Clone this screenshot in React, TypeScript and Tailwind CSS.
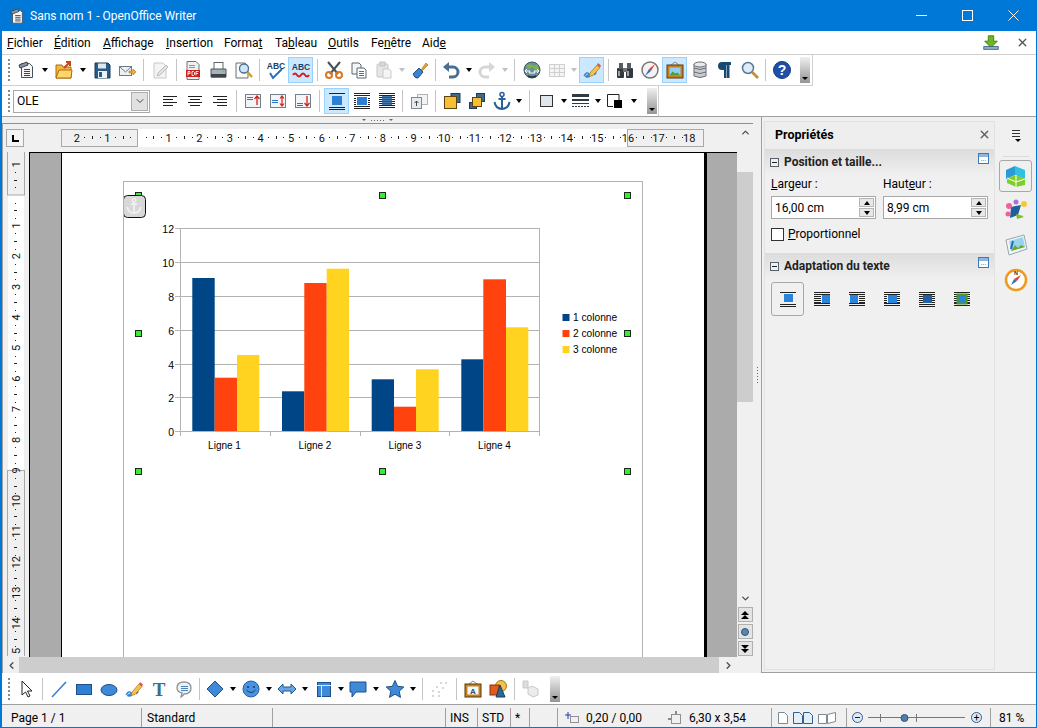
import React from "react";
import { ChevronUp, ChevronDown, ChevronLeft, ChevronRight, X } from "lucide-react";

const S = ({ children, size = 20, box = 20 }: { children: React.ReactNode; size?: number; box?: number }) => (
  <svg width={size} height={size} viewBox={`0 0 ${box} ${box}`} className="block">
    {children}
  </svg>
);

const lines = (ys: number[], x1: number, x2: number, c = "#222") =>
  ys.map((y) => <line key={y} x1={x1} x2={x2} y1={Math.floor(y) + 0.5} y2={Math.floor(y) + 0.5} stroke={c} strokeWidth="1" />);

const icons: Record<string, React.ReactNode> = {
  newdoc: (
    <>
      <path d="M5.500 3.500h8l3 3v11h-11z" fill="#f4f6f8" stroke="#45525e" />
      <path d="M3 5l8-3 1 3-8 3z" fill="#8a97a3" stroke="#3b4650" />
      {lines([9, 11, 13, 15], 8, 14, "#3c4650")}
    </>
  ),
  open: (
    <>
      <path d="M2 5h6l1 2h8v11H2z" fill="#f6b73c" stroke="#a86d10" />
      <path d="M2 18l3-8h13l-1 8z" fill="#ffd66b" stroke="#a86d10" />
      <path d="M10 8l6-6M12 2h4v4" stroke="#c9431b" strokeWidth="2" fill="none" />
    </>
  ),
  save: (
    <>
      <path d="M3 3h13l2 2v13H3z" fill="#2c5a86" stroke="#1d3b58" />
      <rect x="6" y="3.500" width="8" height="5" fill="#dfe7ee" />
      <rect x="6" y="11" width="9" height="7" fill="#eef3f7" />
      <rect x="7" y="12" width="3" height="5" fill="#2c5a86" />
    </>
  ),
  mail: (
    <>
      <rect x="2.500" y="6.500" width="12" height="9" fill="#eef1f4" stroke="#6d7a86" />
      <path d="M3 7l5.500 5L14 7" fill="none" stroke="#6d7a86" />
      <path d="M12 11h4V9l3 3-3 3v-2h-4z" fill="#f3b33d" stroke="#a5720f" strokeWidth=".6" />
    </>
  ),
  edit: (
    <>
      <path d="M4 3h9l3 3v12H4z" fill="#f4f4f4" stroke="#c9c9c9" />
      <path d="M8 13l8-8 2 2-8 8-3 1z" fill="#e2e2e2" stroke="#bdbdbd" />
    </>
  ),
  pdf: (
    <>
      <path d="M4 1.500h9l3 3v15H4z" fill="#eef1f4" stroke="#68737d" />
      {lines([5, 7], 6, 12, "#8b96a0")}
      <rect x="3" y="10" width="14" height="7" fill="#c8201b" />
      <path d="M5 15.500v-4h2v2H5M9 11.500v4h1.500l1-1v-2l-1-1zM13 15.500v-4h2.500M13 13.500h2" stroke="#fff" fill="none" strokeWidth=".9" />
    </>
  ),
  print: (
    <>
      <rect x="6" y="2.500" width="9" height="7" fill="#fff" stroke="#5e6870" />
      <path d="M3 9h15v8H3z" fill="#a9b1b8" stroke="#4b545b" />
      <rect x="3" y="14" width="15" height="3.500" fill="#3d454c" />
      <rect x="14" y="10.500" width="2" height="1.500" fill="#5fd15f" />
    </>
  ),
  preview: (
    <>
      <path d="M3 3h9l3 3v12H3z" fill="#fafafa" stroke="#66717b" />
      <circle cx="11" cy="8.500" r="4.500" fill="#cfe6f8" stroke="#4f6f8a" strokeWidth="1.300" />
      <path d="M14.500 12l4.500 5" stroke="#d59a2a" strokeWidth="2.400" />
    </>
  ),
  spell: (
    <>
      <path d="M4 13l3 5 9-9" fill="none" stroke="#2a6fc0" strokeWidth="2" />
      <text x="10" y="9" textAnchor="middle" fontSize="8.500" fontWeight="700" fontFamily="Liberation Sans" fill="#1f3f66">ABC</text>
    </>
  ),
  autospell: (
    <>
      <text x="10" y="10" textAnchor="middle" fontSize="8.500" fontWeight="700" fontFamily="Liberation Sans" fill="#1f3f66">ABC</text>
      <path d="M2 15q2-3 4 0t4 0 4 0 4 0" fill="none" stroke="#d4201c" strokeWidth="2" />
    </>
  ),
  cut: (
    <>
      <path d="M4 2l10 12M16 2L6 14" stroke="#4a4f54" strokeWidth="2" />
      <circle cx="5" cy="15" r="3" fill="none" stroke="#d8791f" strokeWidth="2" />
      <circle cx="15" cy="15" r="3" fill="none" stroke="#d8791f" strokeWidth="2" />
    </>
  ),
  copy: (
    <>
      <path d="M3 3h7l2 2v9H3z" fill="#f3f5f7" stroke="#5b6670" />
      <path d="M8 8h7l2 2v8H8z" fill="#fff" stroke="#5b6670" />
      {lines([11, 13, 15], 10, 15, "#4277a8")}
    </>
  ),
  paste: (
    <>
      <rect x="3" y="4" width="11" height="13" rx="1" fill="#e6e6e6" stroke="#c4c4c4" />
      <rect x="6" y="2" width="5" height="4" fill="#d8d8d8" stroke="#c4c4c4" />
      <path d="M9 9h6l2 2v7H9z" fill="#f5f5f5" stroke="#c9c9c9" />
    </>
  ),
  brush: (
    <>
      <path d="M11 10l5-7 2 2-6 6z" fill="#e4a035" stroke="#9a6a1a" strokeWidth=".6" />
      <path d="M3 14l6-6 4 4-5 6q-3 1-5-4z" fill="#3c83d0" stroke="#1f4f85" />
    </>
  ),
  undo: (
    <>
      <path d="M5 7h7a4.500 4.500 0 010 10H8" fill="none" stroke="#4a6f92" strokeWidth="3" />
      <path d="M8 2v10L2 7z" fill="#4a6f92" />
    </>
  ),
  redo: (
    <>
      <path d="M15 7H8a4.500 4.500 0 000 10h4" fill="none" stroke="#d6d6d6" strokeWidth="3" />
      <path d="M12 2v10l6-5z" fill="#d6d6d6" />
    </>
  ),
  globe: (
    <>
      <circle cx="10" cy="10" r="8" fill="#6b8f9c" stroke="#3f5560" />
      <path d="M4 6q3-3 6-1t5-1l2 5-4 1-2-3-5 2z" fill="#7fb24a" />
      <path d="M3 11h5l-1 2h6l-1-2h5M5 13l-2-2 2-2M15 13l2-2-2-2" stroke="#fff" fill="none" />
      <path d="M6 16q4 2 8 0" stroke="#26323a" fill="none" strokeWidth="1.500" />
    </>
  ),
  table: (
    <>
      <rect x="2.500" y="4.500" width="15" height="12" fill="#f5f5f5" stroke="#d0d0d0" />
      {lines([8.500, 12.500], 3, 17, "#d0d0d0")}
      <path d="M7.500 5v11M12.500 5v11" stroke="#d0d0d0" />
    </>
  ),
  draw: (
    <>
      <path d="M2 16q3-5 5-2t-2 3 4-3 3 1" fill="none" stroke="#3b83cf" strokeWidth="1.400" />
      <path d="M8 13l7-8 3 2.500-7 8-4 1z" fill="#f6c24a" stroke="#a1701c" strokeWidth=".7" />
      <path d="M15 5l1-2 3 2.500-1 2z" fill="#e0544a" />
    </>
  ),
  binoc: (
    <>
      <rect x="2" y="8" width="7" height="10" rx="1" fill="#33383d" />
      <rect x="11" y="8" width="7" height="10" rx="1" fill="#33383d" />
      <rect x="4" y="3" width="4" height="6" fill="#555c63" />
      <rect x="12" y="3" width="4" height="6" fill="#555c63" />
      <rect x="8" y="8" width="4" height="4" fill="#6d747a" />
      <rect x="3" y="11" width="2" height="5" fill="#9aa3ab" />
      <rect x="12" y="11" width="2" height="5" fill="#9aa3ab" />
    </>
  ),
  compass: (
    <>
      <circle cx="10" cy="10" r="8" fill="#f3f3f3" stroke="#777" strokeWidth="1.500" />
      <path d="M15 4l-4 7-2-2z" fill="#e0412f" />
      <path d="M5 16l4-7 2 2z" fill="#2f6fb5" />
    </>
  ),
  gallery: (
    <>
      <path d="M6 5l4-3 4 3" fill="none" stroke="#888" />
      <rect x="2" y="5" width="16" height="13" fill="#c87f1f" stroke="#5a3a0e" />
      <rect x="4.500" y="7.500" width="11" height="8" fill="#8fd0f5" />
      <path d="M4.500 15.500l3-4 3 2 2-1 3 3z" fill="#4f9e3a" />
    </>
  ),
  db: (
    <>
      <path d="M4 4v12q6 3 12 0V4z" fill="#c9cdd1" stroke="#666e75" />
      <ellipse cx="10" cy="4.500" rx="6" ry="2.500" fill="#e8eaec" stroke="#666e75" />
      <path d="M4 8q6 3 12 0M4 12q6 3 12 0" fill="none" stroke="#666e75" />
    </>
  ),
  pilcrow: <path d="M9 18V10H7a4 4 0 010-8h9v3h-1.500v13H12V5h-.5v13z" fill="#174a72" />,
  find: (
    <>
      <circle cx="8" cy="8" r="5.500" fill="#dcecf9" stroke="#5f7890" strokeWidth="1.500" />
      <path d="M12 12l6 6" stroke="#c68f2c" strokeWidth="2.600" />
    </>
  ),
  help: (
    <>
      <circle cx="10" cy="10" r="8.500" fill="#1f4fa8" stroke="#14397c" />
      <text x="10" y="15" textAnchor="middle" fontSize="14" fontWeight="700" fontFamily="Liberation Sans" fill="#fff">?</text>
    </>
  ),
  alignL: <>{lines([5], 3, 17)}{lines([8], 3, 13)}{lines([11], 3, 17)}{lines([14], 3, 13)}</>,
  alignC: <>{lines([5], 3, 17)}{lines([8], 5, 15)}{lines([11], 3, 17)}{lines([14], 5, 15)}</>,
  alignR: <>{lines([5], 3, 17)}{lines([8], 7, 17)}{lines([11], 3, 17)}{lines([14], 7, 17)}</>,
  vtop: (
    <>
      <rect x="2.500" y="3.500" width="15" height="13" fill="#f2f5f8" stroke="#75808a" />
      {lines([6, 8], 4, 10, "#2a76c6")}
      <path d="M14 14V6M11.500 8L14 5l2.500 3" stroke="#d8201c" fill="none" strokeWidth="1.300" />
    </>
  ),
  vmid: (
    <>
      <rect x="2.500" y="3.500" width="15" height="13" fill="#f2f5f8" stroke="#75808a" />
      {lines([9, 11], 4, 10, "#2a76c6")}
      <path d="M14 6v8M12 7.500L14 5l2 2.500M12 12.500l2 2.500 2-2.500" stroke="#d8201c" fill="none" strokeWidth="1.200" />
    </>
  ),
  vbot: (
    <>
      <rect x="2.500" y="3.500" width="15" height="13" fill="#f2f5f8" stroke="#75808a" />
      {lines([12, 14], 4, 10, "#2a76c6")}
      <path d="M14 5v9M11.500 12l2.500 3 2.500-3" stroke="#d8201c" fill="none" strokeWidth="1.300" />
    </>
  ),
  wrapNone: (
    <>
      {lines([2, 16, 18], 2, 18)}
      <rect x="5" y="5" width="10" height="9" fill="#2b7fd4" />
    </>
  ),
  wrapPage: (
    <>
      {lines([2, 4, 15, 17], 2, 18)}
      {lines([7, 9, 11, 13], 2, 4)}
      {lines([7, 9, 11, 13], 16, 18)}
      <rect x="5" y="6" width="10" height="8" fill="#2b7fd4" />
    </>
  ),
  wrapThrough: (
    <>
      {lines([2, 4, 6, 8, 10, 12, 14, 16], 2, 18)}
      <rect x="5" y="5" width="10" height="9" fill="#23609f" opacity=".85" />
    </>
  ),
  frameLink: (
    <>
      <rect x="8.500" y="3.500" width="10" height="10" fill="#f3f3f3" stroke="#aeb4b9" />
      <rect x="2.500" y="6.500" width="10" height="11" fill="#e6eaee" stroke="#7f8a94" />
      <path d="M7.500 15v-5M5.500 12l2-2 2 2" stroke="#444" fill="none" />
    </>
  ),
  front: (
    <>
      <rect x="9" y="2.500" width="9" height="9" fill="#3c6a90" stroke="#1d3b58" />
      <rect x="2.500" y="5.500" width="12" height="12" fill="#f8bf35" stroke="#5c4310" />
    </>
  ),
  back: (
    <>
      <rect x="9.500" y="2.500" width="8" height="8" fill="#3c6a90" stroke="#1d3b58" />
      <rect x="2.500" y="11.500" width="7" height="6" fill="#3c6a90" stroke="#1d3b58" />
      <rect x="5.500" y="6.500" width="9" height="9" fill="#f8bf35" stroke="#5c4310" />
    </>
  ),
  anchor: (
    <>
      <circle cx="10" cy="3.500" r="2" fill="none" stroke="#2a5f98" strokeWidth="1.500" />
      <path d="M10 5.500V18M6.500 8h7" stroke="#2a5f98" strokeWidth="2" />
      <path d="M2.500 11q1 6.500 7.500 7 6.500-.5 7.500-7" fill="none" stroke="#2a5f98" strokeWidth="2" />
    </>
  ),
  border: <rect x="3.500" y="4.500" width="12" height="11" fill="#dfe6ec" stroke="#333" />,
  linestyle: (
    <>
      <rect x="1" y="3" width="17" height="3" fill="#2f3b45" />
      <rect x="1" y="8" width="17" height="2" fill="#2f3b45" />
      {lines([12], 1, 18, "#2f3b45")}
      <line x1="1" x2="18" y1="15.500" y2="15.500" stroke="#2f3b45" strokeDasharray="2 1" />
    </>
  ),
  bgfill: (
    <>
      <path d="M8 15.500H2.500V3.500H14V9" fill="#fff" stroke="#222" />
      <rect x="9" y="9" width="8" height="8" fill="#000" />
    </>
  ),
  pointer: <path d="M6 2v14l3.500-3 2.500 5 2-1-2.500-5H16z" fill="#fff" stroke="#222" />,
  line: <line x1="3" y1="18" x2="17" y2="3" stroke="#3d80c8" strokeWidth="1.600" />,
  rect: <rect x="2.500" y="5.500" width="15" height="10" fill="#2f7fd6" stroke="#1e4f86" />,
  ellipse: <ellipse cx="10" cy="11" rx="8" ry="5.500" fill="#3f8ad8" stroke="#1e4f86" />,
  ttext: <text x="10" y="17" textAnchor="middle" fontSize="19" fontWeight="700" fontFamily="Liberation Serif" fill="#3b6c8f">T</text>,
  callout: (
    <>
      <path d="M3 9q0-6 7-6t7 6-7 6q-1 2-3 3l1-4q-5-1-5-5z" fill="#eef0f2" stroke="#8b949c" strokeWidth="1.300" />
      {lines([7, 9, 11], 7, 14, "#4a83b8")}
    </>
  ),
  diamond: <path d="M10 2l8 8-8 8-8-8z" fill="#3f8ad8" stroke="#1e4f86" />,
  smiley: (
    <>
      <circle cx="10" cy="10" r="8" fill="#4a93e0" stroke="#2362a4" />
      <circle cx="7" cy="8" r="1" fill="#163e6b" />
      <circle cx="13" cy="8" r="1" fill="#163e6b" />
      <path d="M5.500 11q4.500 5 9 0" stroke="#163e6b" fill="none" />
    </>
  ),
  arrows: <path d="M1 10l5-5v3h8V5l5 5-5 5v-3H6v3z" fill="#6aa6e4" stroke="#20578f" />,
  flow: (
    <>
      <rect x="3.500" y="3.500" width="13" height="14" fill="#3f8ad8" stroke="#1e4f86" />
      <path d="M3 6.500h14M7.500 6.500V18" stroke="#dbe9f7" />
    </>
  ),
  bubble: <path d="M2 3h16v10H8l-4 5v-5H2z" fill="#3f8ad8" stroke="#1e4f86" />,
  star: <path d="M10 1.500l2.600 5.800 6.200.7-4.600 4.200 1.300 6.200L10 15.200l-5.500 3.200 1.300-6.200L1.200 8l6.200-.7z" fill="#3f8ad8" stroke="#1e4f86" />,
  points: (
    <>
      {[[11, 4], [16, 4], [7, 8], [13, 9], [3, 12], [9, 13], [3, 17], [9, 17]].map(([x, y]) => (
        <circle key={`${x}-${y}`} cx={x} cy={y} r=".9" fill="#c4c4c4" />
      ))}
    </>
  ),
  fontwork: (
    <>
      <path d="M6 5l4-3 4 3" fill="none" stroke="#888" />
      <rect x="2" y="5" width="16" height="13" fill="#c87f1f" stroke="#5a3a0e" />
      <rect x="4.500" y="7.500" width="11" height="8" fill="#f4f7fa" />
      <text x="10" y="14.500" textAnchor="middle" fontSize="8" fontWeight="700" fontFamily="Liberation Sans" fill="#244f7d">A</text>
    </>
  ),
  shapes: (
    <>
      <circle cx="13" cy="7" r="5.500" fill="#f3c04a" stroke="#a77a16" />
      <rect x="2" y="6" width="9" height="10" fill="#e25a1c" stroke="#8a330c" />
      <path d="M12 6l5 12H8z" fill="#2f6796" stroke="#163e60" />
    </>
  ),
  extrude: (
    <>
      <path d="M2 2h5v7H2z" fill="#dcdcdc" stroke="#c8c8c8" />
      <path d="M7 9l4-2 6 3v6l-5 2-5-3z" fill="#ececec" stroke="#c8c8c8" />
    </>
  ),
};

const Ic = ({ name }: { name: string }) => <S>{icons[name]}</S>;

const Btn = ({ name, active }: { name: string; active?: boolean }) => (
  <div
    className={
      active
        ? "w-[25px] h-[26px] flex items-center justify-center border border-[#99d1ff] bg-[#cce8ff]"
        : "w-[25px] h-[26px] flex items-center justify-center"
    }
  >
    <Ic name={name} />
  </div>
);

const Caret = ({ w = 13, off }: { w?: number; off?: boolean }) => (
  <div className="flex items-center justify-center shrink-0" style={{ width: w }}>
    <div
      className={
        off
          ? "w-0 h-0 border-x-[3.5px] border-x-transparent border-t-[4px] border-t-[#c0c0c0]"
          : "w-0 h-0 border-x-[3.5px] border-x-transparent border-t-[4px] border-t-black"
      }
    />
  </div>
);

const Sep = ({ w = 8 }: { w?: number }) => (
  <div className="flex justify-center shrink-0" style={{ width: w }}>
    <div className="w-px h-[22px] bg-[#c4c4c4]" />
  </div>
);

const Grip = ({ w = 13 }: { w?: number }) => (
  <div className="flex justify-center items-center shrink-0 pl-[2px]" style={{ width: w }}>
    <div className="h-[22px] w-0 border-l-2 border-dotted border-[#8a8a8a]" />
  </div>
);

const More = () => (
  <div className="w-[10px] h-[26px] bg-linear-to-b from-[#f0f0f0] to-[#959595] flex items-end justify-center pb-[3px]">
    <div className="w-0 h-0 border-x-[3px] border-x-transparent border-t-[3px] border-t-black" />
  </div>
);

const Menu = ({ before, u, after, cls }: { before: string; u: string; after: string; cls: string }) => (
  <span className={cls}>
    {before}
    <u>{u}</u>
    {after}
  </span>
);

const HRuler = () => {
  const marks: React.ReactNode[] = [];
  const cm = 30.62;
  const zero = 77; // svg x of the ruler origin
  for (let i = -2; i <= 18; i++) {
    const x = zero + i * cm;
    if (i !== 0) {
      marks.push(
        <text key={`n${i}`} x={x} y={13} textAnchor="middle" fontSize="11" fontFamily="Roboto" fill="#111">
          {Math.abs(i)}
        </text>,
      );
    }
    if (i < 18) {
      [0.25, 0.75].forEach((f) =>
        marks.push(<rect key={`d${i}${f}`} x={Math.round(x + f * cm)} y={8} width="1" height="1" fill="#222" />),
      );
      marks.push(<rect key={`h${i}`} x={Math.round(x + 0.5 * cm)} y={7} width="1" height="3" fill="#222" />);
    }
  }
  return (
    <svg width="643" height="18" className="block">
      <rect x="0" y="0" width="643" height="18" fill="#f0f0f0" />
      <rect x="77" y="0" width="489" height="18" fill="#fff" />
      <rect x=".5" y=".5" width="76" height="17" fill="none" stroke="#a8a8a8" />
      <rect x="566.500" y=".5" width="76" height="17" fill="none" stroke="#a8a8a8" />
      {marks}
    </svg>
  );
};

const VRuler = () => {
  const marks: React.ReactNode[] = [];
  const cm = 30.6;
  const zero = 43;
  for (let i = -1; i <= 15; i++) {
    const y = zero + i * cm;
    if (i !== 0) {
      marks.push(
        <text
          key={`n${i}`}
          x={9}
          y={y}
          transform={`rotate(-90 9 ${y})`}
          dy="4"
          textAnchor="middle"
          fontSize="11"
          fontFamily="Roboto"
          fill="#111"
        >
          {Math.abs(i)}
        </text>,
      );
    }
    [0.25, 0.75].forEach((f) =>
      marks.push(<rect key={`d${i}${f}`} x={8} y={Math.round(y + f * cm)} width="1" height="1" fill="#222" />),
    );
    marks.push(<rect key={`h${i}`} x={7} y={Math.round(y + 0.5 * cm)} width="3" height="1" fill="#222" />);
  }
  return (
    <svg width="18" height="504" className="block shrink-0">
      <rect x="0" y="0" width="18" height="504" fill="#f0f0f0" />
      <rect x="1" y="43" width="16" height="275" fill="#fff" />
      <rect x=".5" y="-2" width="17" height="45" fill="none" stroke="#a8a8a8" />
      <rect x=".5" y="318.500" width="17" height="190" fill="none" stroke="#a8a8a8" />
      {marks}
    </svg>
  );
};

const bars = [
  { x: [192.3, 214.7, 237, 259.3], t: [278, 377.7, 355] },
  { x: [282, 304.3, 326.7, 349], t: [391.3, 283, 268.7] },
  { x: [371.7, 394, 416, 438.7], t: [379.3, 406.7, 369.3] },
  { x: [461.3, 483.3, 506, 528.3], t: [359.3, 279.3, 327.3] },
];
const colors = ["#004586", "#ff420e", "#ffd320"];
const gridY = [228.500, 262.500, 296.500, 330.500, 364.500, 397.500, 431.500];
const handles = [
  [138, 195],
  [382, 195],
  [627, 195],
  [138, 333],
  [627, 333],
  [138, 471],
  [382, 471],
  [627, 471],
];

const Chart = () => (
  <svg width="518" height="476" viewBox="124 182 518 476" className="block" fontFamily="Liberation Sans">
    {gridY.map((y, i) => (
      <g key={y}>
        <line x1="175" x2="540" y1={y} y2={y} stroke="#b3b3b3" />
        <text x="174" y={y + 4} textAnchor="end" fontSize="10.500" fill="#000">
          {12 - i * 2}
        </text>
      </g>
    ))}
    <line x1="180.500" x2="180.500" y1="228" y2="436" stroke="#b3b3b3" />
    <line x1="539.500" x2="539.500" y1="228" y2="436" stroke="#b3b3b3" />
    {[270.500, 360.500, 449.500].map((x) => (
      <line key={x} x1={x} x2={x} y1="431" y2="436" stroke="#b3b3b3" />
    ))}
    {bars.map((g, gi) =>
      g.t.map((t, i) => (
        <rect key={`${gi}-${i}`} x={g.x[i]} y={t} width={g.x[i + 1] - g.x[i]} height={431 - t} fill={colors[i]} />
      )),
    )}
    {["Ligne 1", "Ligne 2", "Ligne 3", "Ligne 4"].map((l, i) => (
      <text key={l} x={[224.500, 315, 405, 494.500][i]} y="449" textAnchor="middle" fontSize="10" fill="#000">
        {l}
      </text>
    ))}
    {["1 colonne", "2 colonne", "3 colonne"].map((l, i) => (
      <g key={l}>
        <rect x="562.500" y={314 + i * 16} width="7" height="7" fill={colors[i]} />
        <text x="573" y={321 + i * 16} fontSize="10.200" fill="#000">
          {l}
        </text>
      </g>
    ))}
    {handles.map(([x, y]) => (
      <rect key={`${x}-${y}`} x={x - 2.5} y={y - 2.5} width="6" height="6" fill="#33ee33" stroke="#1a2a1a" />
    ))}
    <rect x="123.500" y="195.500" width="22" height="22" rx="4" fill="#d8d8d8" stroke="#111" />
    <g transform="translate(125 197) scale(.9)" opacity=".9">
      <circle cx="10" cy="3.500" r="2" fill="none" stroke="#f4f4f4" strokeWidth="1.500" />
      <path d="M10 5.500V18M6.500 8h7" stroke="#f4f4f4" strokeWidth="2" />
      <path d="M2.500 11q1 6.500 7.500 7 6.500-.5 7.500-7" fill="none" stroke="#f4f4f4" strokeWidth="2" />
    </g>
  </svg>
);

const Spin = ({ value }: { value: string }) => (
  <div className="w-[105px] h-[23px] border border-[#a8a8a8] bg-white flex items-center justify-between pl-[3px] pr-px">
    <span>{value}</span>
    <div className="w-[15px] h-[19px] flex flex-col gap-px">
      <div className="flex-1 bg-[#e8e8e8] border border-[#b5b5b5] flex items-center justify-center">
        <div className="w-0 h-0 border-x-[3px] border-x-transparent border-b-[4px] border-b-black" />
      </div>
      <div className="flex-1 bg-[#e8e8e8] border border-[#b5b5b5] flex items-center justify-center">
        <div className="w-0 h-0 border-x-[3px] border-x-transparent border-t-[4px] border-t-black" />
      </div>
    </div>
  </div>
);

const DeckHeader = ({ title }: { title: string }) => (
  <div className="h-[26px] shrink-0 bg-linear-to-b from-[#dcdcdc] to-[#f0f0f0] flex items-center pl-[5px] pr-[5px]">
    <div className="w-[9px] h-[9px] border border-[#55606a] bg-[#eef0f2] flex items-center justify-center mr-[5px]">
      <div className="w-[5px] h-px bg-[#222]" />
    </div>
    <span className="font-bold text-[#222] flex-1">{title}</span>
    <div className="w-[11px] h-[11px] border border-[#3f78b5] bg-white mb-[8px] flex flex-col">
      <div className="h-[3px] bg-[#8fb6de]" />
      <div className="text-[7px] leading-[5px] text-center text-[#244f7d]">...</div>
    </div>
  </div>
);

type WrapKind = "none" | "right" | "left" | "both" | "through" | "frame";

// the little text-wrap pictures in the sidebar deck
const WrapIcon = ({ kind }: { kind: WrapKind }) => {
  const boxX = kind === "right" ? 8 : kind === "left" ? 1 : 4;
  const boxW = kind === "right" || kind === "left" ? 8 : 9;
  const fullRows = kind === "none" ? [1, 13, 15] : kind === "through" ? [1, 3, 5, 7, 9, 11, 13, 15] : [1, 3, 12, 14];
  const sideRows = kind === "none" || kind === "through" ? [] : [5, 7, 9, 11];
  return (
    <svg width="16" height="16" className="block">
      {lines(fullRows, 0, 16)}
      {(kind === "right" || kind === "both" || kind === "frame") && lines(sideRows, 0, 3)}
      {(kind === "left" || kind === "both" || kind === "frame") && lines(sideRows, 13, 16)}
      {kind === "right" && lines(sideRows, 3, 7)}
      {kind === "left" && lines(sideRows, 10, 13)}
      <rect x={boxX} y={kind === "none" ? 3 : 4} width={boxW} height={8} fill={kind === "through" ? "#23609f" : "#2b84dc"} />
      {kind === "frame" && <rect x="3.500" y="3.500" width="9" height="9" fill="#2b84dc" stroke="#4c9a1e" strokeWidth="2" />}
    </svg>
  );
};

const TabIcon = ({ children }: { children: React.ReactNode }) => (
  <div className="h-[35px] flex items-center justify-center">
    <S size={26} box={26}>{children}</S>
  </div>
);

const StatusCell = ({ w, children }: { w: number; children?: React.ReactNode }) => (
  <div className="h-[19px] border-r border-[#a0a0a0] flex items-center shrink-0" style={{ width: w }}>
    {children}
  </div>
);

export default function App() {
  return (
    <div
      className="w-[1037px] h-[728px] flex flex-col overflow-hidden bg-white border-l-2 border-r border-b border-[#0078d7] text-[12px] text-black"
      style={{ fontFamily: "Roboto, 'Liberation Sans', sans-serif" }}
    >
      {/* title */}
      <div className="h-[31px] shrink-0 bg-[#0078d7] flex items-center text-white">
        <div className="w-[28px] flex justify-end pr-[4px]">
          <S size={18}>
            <path d="M5 4h9l2 2v12H5z" fill="#f4f6f8" stroke="#45525e" />
            <path d="M3 5l8-3 1 3-8 3z" fill="#8a97a3" stroke="#3b4650" />
            {lines([9, 11, 13, 15], 8, 14, "#3c4650")}
          </S>
        </div>
        <span className="flex-1">Sans nom 1 - OpenOffice Writer</span>
        <div className="w-[46px] flex justify-center">
          <svg width="11" height="11" className="block"><line x1="0" x2="11" y1="5.500" y2="5.500" stroke="#fff" /></svg>
        </div>
        <div className="w-[46px] flex justify-center">
          <svg width="11" height="11" className="block"><rect x=".5" y=".5" width="10" height="10" fill="none" stroke="#fff" /></svg>
        </div>
        <div className="w-[46px] flex justify-center">
          <svg width="11" height="11" className="block"><path d="M.5.500l10 10M10.500.500l-10 10" stroke="#fff" fill="none" /></svg>
        </div>
      </div>

      {/* menu */}
      <div className="h-[24px] shrink-0 flex items-center border-b border-[#d0d0d0] pl-[5px] pr-[6px]">
        <Menu cls="w-[47px]" before="" u="F" after="ichier" />
        <Menu cls="w-[49px]" before="" u="É" after="dition" />
        <Menu cls="w-[63px]" before="" u="A" after="ffichage" />
        <Menu cls="w-[58px]" before="" u="I" after="nsertion" />
        <Menu cls="w-[51px]" before="Forma" u="t" after="" />
        <Menu cls="w-[53px]" before="Ta" u="b" after="leau" />
        <Menu cls="w-[43px]" before="" u="O" after="utils" />
        <Menu cls="w-[51px]" before="Fe" u="n" after="être" />
        <Menu cls="w-[30px]" before="Aid" u="e" after="" />
        <div className="flex-1" />
        <div className="mr-[16px]">
          <S size={18}>
            <path d="M7 2h6v6h4l-7 7-7-7h4z" fill="#6cb81e" stroke="#3d7a0e" />
            <rect x="2" y="14" width="16" height="3" fill="#8fb5d0" stroke="#3a5f7d" />
          </S>
        </div>
        <X size={13} strokeWidth={2.5} className="text-[#555] mr-[1px]" />
      </div>

      {/* standard toolbar */}
      <div className="h-[31px] shrink-0 w-[811px] flex items-center border-r border-b border-[#d0d0d0]">
        <Grip w={11} />
        <Btn name="newdoc" /><Caret />
        <Btn name="open" /><Caret />
        <Btn name="save" /><Btn name="mail" /><Sep />
        <Btn name="edit" /><Sep />
        <Btn name="pdf" /><Btn name="print" /><Btn name="preview" /><Sep />
        <Btn name="spell" /><Btn name="autospell" active /><Sep />
        <Btn name="cut" /><Btn name="copy" /><Btn name="paste" /><Caret w={11} off />
        <Btn name="brush" /><Sep w={6} />
        <Btn name="undo" /><Caret w={11} />
        <Btn name="redo" /><Caret w={11} off /><Sep w={9} />
        <Btn name="globe" /><Btn name="table" /><Caret w={10} off />
        <Btn name="draw" active /><Sep />
        <Btn name="binoc" /><Btn name="compass" /><Btn name="gallery" active /><Btn name="db" /><Btn name="pilcrow" /><Btn name="find" /><Sep w={7} />
        <Btn name="help" />
        <div className="ml-[6px]"><More /></div>
      </div>

      {/* format toolbar */}
      <div className="h-[31px] shrink-0 flex items-center border-b border-[#a0a0a0]">
        <div className="w-[657px] h-[30px] flex items-center border-r border-[#d0d0d0]">
          <Grip w={11} />
          <div className="w-[137px] h-[23px] border border-[#a8a8a8] flex items-center justify-between pl-[3px] pr-px">
            <span>OLE</span>
            <div className="w-[17px] h-[19px] bg-[#e1e1e1] border border-[#adadad] flex items-center justify-center">
              <ChevronDown size={12} className="text-[#444]" />
            </div>
          </div>
          <div className="w-[7px]" />
          <Btn name="alignL" /><Btn name="alignC" /><Btn name="alignR" /><Sep />
          <Btn name="vtop" /><Btn name="vmid" /><Btn name="vbot" /><Sep w={9} />
          <Btn name="wrapNone" active /><Btn name="wrapPage" /><Btn name="wrapThrough" /><Sep w={7} />
          <Btn name="frameLink" /><Sep />
          <Btn name="front" /><Btn name="back" /><Btn name="anchor" /><Caret w={10} /><Sep w={10} />
          <Btn name="border" /><Caret w={10} />
          <div className="-ml-px"><Btn name="linestyle" /></div><Caret w={10} />
          <div className="-ml-px"><Btn name="bgfill" /></div><Caret w={13} />
          <div className="ml-[7px]"><More /></div>
        </div>
      </div>

      {/* main */}
      <div className="flex-1 min-h-0 flex bg-[#f0f0f0]">
        <div className="w-[751px] shrink-0 flex flex-col">
          {/* sash under the toolbars */}
          <div className="h-[7px] shrink-0 flex items-center justify-center border-b border-[#8f8f8f]">
            <div className="flex gap-[2px] items-center">
              <div className="w-0 h-0 border-x-[2px] border-x-transparent border-t-[2px] border-t-[#666] mr-[3px]" />
              {[1, 2, 3, 4, 5].map((d) => <div key={d} className="w-px h-px bg-[#666]" />)}
              <div className="w-0 h-0 border-x-[2px] border-x-transparent border-t-[2px] border-t-[#666] ml-[3px]" />
            </div>
          </div>
          <div className="flex-1 min-h-0 flex flex-col border-l border-[#a0a0a0]">
            <div className="flex-1 min-h-0 flex">
              <div className="w-[734px] flex flex-col">
                {/* ruler row */}
                <div className="h-[28px] shrink-0 flex items-center pl-[3px]">
                  <div className="w-[18px] h-[18px] bg-[#f4f4f4] border border-[#a8a8a8] flex items-center justify-center">
                    <div className="w-[7px] h-[7px] border-l-2 border-b-2 border-black" />
                  </div>
                  <div className="ml-[37px]"><HRuler /></div>
                </div>
                <div className="flex-1 min-h-0 flex pl-[4px]">
                  <VRuler />
                  <div className="ml-[4px] flex-1 bg-[#ababab] border-l border-t border-black flex overflow-hidden">
                    <div className="ml-[31px] w-[646px] h-full bg-white border-l border-r-[3px] border-black shrink-0 overflow-hidden">
                      <div className="ml-[61px] mt-[28px] w-[520px] h-[490px] border border-[#b3b3b3]">
                        <Chart />
                      </div>
                    </div>
                  </div>
                </div>
              </div>
              {/* vertical scrollbar */}
              <div className="w-[16px] shrink-0 flex flex-col items-center">
                <div className="h-[20px] pt-[3px]"><ChevronUp size={11} strokeWidth={3} className="text-[#505050]" /></div>
                <div className="h-[28px] shrink-0" />
                <div className="w-full h-[230px] shrink-0 bg-[#cdcdcd]" />
                <div className="flex-1" />
                <div className="h-[14px]"><ChevronDown size={11} strokeWidth={3} className="text-[#505050]" /></div>
                <div className="flex flex-col gap-[2px] pb-px">
                  <div className="w-[15px] h-[15px] bg-[#e4e4e4] border border-[#b0b0b0] flex flex-col items-center justify-center">
                    <div className="w-0 h-0 border-x-[4px] border-x-transparent border-b-[4px] border-b-black" />
                    <div className="w-0 h-0 border-x-[4px] border-x-transparent border-b-[4px] border-b-black" />
                  </div>
                  <div className="w-[15px] h-[15px] bg-[#e4e4e4] border border-[#b0b0b0] flex items-center justify-center">
                    <div className="w-[8px] h-[8px] rounded-full bg-[#5a87ad] border border-[#2f5575]" />
                  </div>
                  <div className="w-[15px] h-[15px] bg-[#e4e4e4] border border-[#b0b0b0] flex flex-col items-center justify-center">
                    <div className="w-0 h-0 border-x-[4px] border-x-transparent border-t-[4px] border-t-black" />
                    <div className="w-0 h-0 border-x-[4px] border-x-transparent border-t-[4px] border-t-black" />
                  </div>
                </div>
              </div>
            </div>
            {/* horizontal scrollbar */}
            <div className="h-[16px] shrink-0 flex items-center">
              <div className="w-[16px] flex justify-center"><ChevronLeft size={11} strokeWidth={3} className="text-[#505050]" /></div>
              <div className="w-[700px] h-full bg-[#cdcdcd]" />
              <div className="w-[18px] flex justify-center"><ChevronRight size={11} strokeWidth={3} className="text-[#505050]" /></div>
            </div>
          </div>
        </div>

        {/* sidebar sash */}
        <div className="w-[8px] shrink-0 flex flex-col items-center justify-center gap-[2px] pb-[40px]">
          {[1, 2, 3, 4, 5, 6].map((d) => <div key={d} className="w-px h-px bg-[#666]" />)}
        </div>

        {/* sidebar */}
        <div className="flex-1 min-w-0 flex border-l border-b border-[#a0a0a0]">
          <div className="w-[231px] shrink-0 mt-[4px] ml-[2px] mb-[2px] border border-[#e2e2e2] flex flex-col">
            <div className="h-[27px] shrink-0 flex items-center bg-[#eeeeee] pl-[10px] pr-[3px]">
              <span className="font-bold flex-1 text-[12.500px]">Propriétés</span>
              <X size={13} strokeWidth={2.5} className="text-[#606060] mb-[3px]" />
            </div>
            <DeckHeader title="Position et taille..." />
            <div className="h-[78px] shrink-0 px-[6px]">
              <div className="flex gap-[7px]">
                <div className="w-[105px]">
                  <div className="h-[21px]"><u>L</u>argeur :</div>
                  <Spin value="16,00 cm" />
                </div>
                <div className="w-[105px]">
                  <div className="h-[21px]">Haut<u>e</u>ur :</div>
                  <Spin value="8,99 cm" />
                </div>
              </div>
              <div className="flex items-center mt-[6px]">
                <div className="w-[13px] h-[13px] border border-[#333] bg-white mr-[4px]" />
                <span><u>P</u>roportionnel</span>
              </div>
            </div>
            <DeckHeader title="Adaptation du texte" />
            <div className="flex items-center pl-[6px] pt-[3px]">
              <div className="w-[33px] h-[34px] border border-[#a8a8a8] rounded-[3px] flex items-center justify-center">
                <WrapIcon kind="none" />
              </div>
              {(["right", "left", "both", "through", "frame"] as WrapKind[]).map((k) => (
                <div key={k} className="w-[35px] flex justify-center">
                  <WrapIcon kind={k} />
                </div>
              ))}
            </div>
          </div>

          {/* deck tabs */}
          <div className="flex-1 flex flex-col items-center pt-[8px]">
            <div className="h-[22px] mb-[9px] flex items-center">
              <div className="flex flex-col gap-[2px] items-center">
                <div className="w-[8px] h-px bg-[#333]" />
                <div className="w-[8px] h-px bg-[#333]" />
                <div className="w-[8px] h-px bg-[#333]" />
                <div className="w-0 h-0 border-x-[3px] border-x-transparent border-t-[3px] border-t-black ml-[5px]" />
              </div>
            </div>
            <div className="w-[26px] h-px bg-[#dcdcdc] mb-[3px]" />
            <div className="w-[33px] h-[32px] border border-[#a8a8a8] rounded-[3px] flex items-center justify-center">
              <S size={26} box={26}>
                <path d="M3 7l9-4v9l-9 4z" fill="#2a9bd8" />
                <path d="M12 3l10 4v9l-10-4z" fill="#2ec1e0" />
                <path d="M4 15l9-3 9 4v6l-9 2-9-4z" fill="#7fcf2a" />
                <path d="M13 12v12M4 15l9 4 9-3" stroke="#fff" fill="none" />
              </S>
            </div>
            <TabIcon>
              <path d="M8 10l10-2-3 10-8 3z" fill="#1f5f9a" />
              <path d="M13 17q5 1 8 3l-7 2z" fill="#7fbd2a" />
              <circle cx="6" cy="9" r="3" fill="#f05fa0" />
              <circle cx="13" cy="5" r="2.500" fill="#b070d0" />
              <circle cx="21" cy="7" r="3" fill="#f5c83a" />
              <circle cx="5" cy="17" r="2.500" fill="#f05fa0" />
            </TabIcon>
            <TabIcon>
              <path d="M3 8l18-5 3 14-18 6z" fill="#f2f6f9" stroke="#9aa6ae" />
              <path d="M6 9l14-4 2 10-14 4z" fill="#9ad3f0" />
              <path d="M8 19l4-6 3 3 3-3 4 2z" fill="#6aa82d" />
              <path d="M10 9l-2 8" stroke="#2a6fa8" strokeWidth="2" />
            </TabIcon>
            <TabIcon>
              <circle cx="13" cy="13" r="10" fill="#fff" stroke="#ee9a1e" strokeWidth="2.500" />
              <path d="M18 8l-4 6-3-2z" fill="#e0412f" />
              <path d="M8 18l3-6 3 2z" fill="#2f6fb5" />
              <text x="13" y="8" textAnchor="middle" fontSize="5.500" fontWeight="700" fontFamily="Liberation Sans" fill="#333">N</text>
            </TabIcon>
          </div>
        </div>
      </div>

      {/* drawing toolbar */}
      <div className="h-[32px] shrink-0 flex items-center border-b border-[#a0a0a0]">
        <div className="w-[559px] flex items-center">
          <Grip w={11} />
          <Btn name="pointer" /><Sep />
          <Btn name="line" /><Btn name="rect" /><Btn name="ellipse" /><Btn name="draw" /><Btn name="ttext" /><Btn name="callout" /><Sep w={6} />
          <Btn name="diamond" /><Caret w={11} />
          <Btn name="smiley" /><Caret w={11} />
          <Btn name="arrows" /><Caret w={12} />
          <Btn name="flow" /><Caret w={9} />
          <Btn name="bubble" /><Caret w={12} />
          <Btn name="star" /><Caret w={11} /><Sep w={9} />
          <Btn name="points" /><Sep />
          <Btn name="fontwork" /><Btn name="shapes" /><Sep />
          <Btn name="extrude" />
          <div className="ml-[7px]"><More /></div>
        </div>
      </div>

      {/* status bar */}
      <div className="h-[22px] shrink-0 bg-[#f0f0f0] flex items-end">
        <StatusCell w={140}><span className="pl-[9px]">Page 1 / 1</span></StatusCell>
        <StatusCell w={131}><span className="pl-[5px]">Standard</span></StatusCell>
        <StatusCell w={173} />
        <StatusCell w={32}><span className="pl-[4px]">INS</span></StatusCell>
        <StatusCell w={33}><span className="pl-[4px]">STD</span></StatusCell>
        <StatusCell w={19}><span className="pl-[4px]">*</span></StatusCell>
        <StatusCell w={28} />
        <StatusCell w={214}>
          <div className="pl-[7px] w-[28px]">
            <svg width="14" height="12" className="block">
              <path d="M3 0v7M0 3h6" stroke="#1f3fa8" />
              <rect x="5.500" y="4.500" width="8" height="6" fill="none" stroke="#333" strokeDasharray="1 1" />
            </svg>
          </div>
          <span className="w-[82px]">0,20 / 0,00</span>
          <svg width="14" height="14" className="block mr-[7px]">
            <rect x="3.500" y="3.500" width="9" height="9" fill="none" stroke="#333" strokeDasharray="1 1" />
            <path d="M0 8h3M8 0v3" stroke="#222" />
          </svg>
          <span>6,30 x 3,54</span>
        </StatusCell>
        <StatusCell w={75}>
          <div className="flex items-center gap-[5px] pl-[6px]">
            <svg width="10" height="12" className="block"><path d="M.5.500h6l3 3v8h-9z" fill="#fff" stroke="#7a8a98" /></svg>
            <svg width="20" height="12" className="block">
              <path d="M.5.500h6l3 3v8h-9zM10.500.500h6l3 3v8h-9z" fill="#e4eef7" stroke="#2b5f96" />
            </svg>
            <svg width="18" height="12" className="block">
              <path d="M.5 2.500h8v9h-8zM9.500 2.500l8-2v9l-8 2z" fill="#fff" stroke="#7a8a98" />
            </svg>
          </div>
        </StatusCell>
        <StatusCell w={144}>
          <div className="flex items-center pl-[5px]">
            <div className="w-[11px] h-[11px] rounded-full border border-[#2f5f90] bg-[#dfe9f2] flex items-center justify-center">
              <div className="w-[5px] h-px bg-[#222]" />
            </div>
            <svg width="97" height="12" className="block ml-[5px]">
              <line x1="0" x2="97" y1="5.500" y2="5.500" stroke="#777" />
              <line x1="12.500" x2="12.500" y1="2" y2="10" stroke="#777" />
              <line x1="48.500" x2="48.500" y1="2" y2="10" stroke="#777" />
              <circle cx="36.500" cy="6" r="3.500" fill="#4f7fa8" stroke="#2f5575" />
            </svg>
            <div className="w-[11px] h-[11px] rounded-full border border-[#2f5f90] bg-[#dfe9f2] flex items-center justify-center ml-[6px] text-[10px] leading-none">+</div>
          </div>
        </StatusCell>
        <span className="pl-[8px]">81 %</span>
      </div>
    </div>
  );
}
